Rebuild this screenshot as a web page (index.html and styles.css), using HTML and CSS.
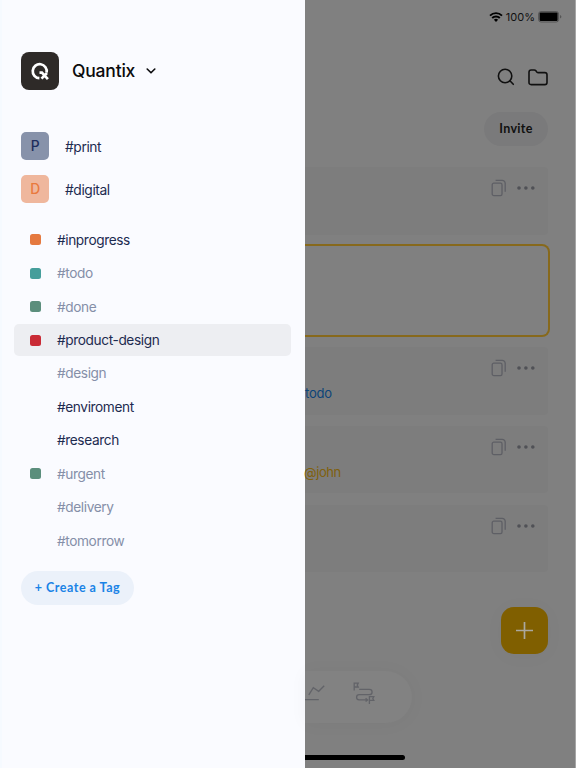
FILE: index.html
```html
<!DOCTYPE html>
<html lang="en">

<head>
    <meta charset="utf-8">
    <title>Quantix</title>
    <link rel="stylesheet" href="styles.css">
</head>

<body>
    <!-- shared icons -->
    <svg class="defs" width="0" height="0">
        <symbol id="copy" viewBox="0 0 16 18">
            <rect x="1.2" y="4.2" width="9.8" height="12.4" rx="1.6" />
            <path d="M4.6 1.4h6.6a3 3 0 0 1 3 3v8.4" />
        </symbol>
        <symbol id="more" viewBox="0 0 18 4">
            <circle cx="2" cy="2" r="1.8" />
            <circle cx="8.9" cy="2" r="1.8" />
            <circle cx="15.8" cy="2" r="1.8" />
        </symbol>
    </svg>
    <div class="app">
        <aside class="sidebar">
            <div class="brand">
                <div class="logo">
                    <svg width="20" height="20" viewBox="0 0 20 20">
                        <path d="M9.400 17.200A7 7 0 1 1 16.600 11.600" />
                        <path d="M9.500 11.600h2.400l6 6.600M17 12L11.500 17.600" />
                    </svg>
                </div>
                <span class="brand-name">Quantix</span>
                <svg class="chevron" width="10" height="6" viewBox="0 0 10 6"><path d="M1.2 1l3.8 3.8L8.8 1" /></svg>
            </div>
            <ul class="groups">
                <li><span class="letter blue">P</span><span>#print</span></li>
                <li><span class="letter orange">D</span><span>#digital</span></li>
            </ul>
            <ul class="tags">
                <li class="tag on"><i class="dot c-orange"></i><span>#inprogress</span></li>
                <li class="tag"><i class="dot c-teal"></i><span>#todo</span></li>
                <li class="tag"><i class="dot c-green"></i><span>#done</span></li>
                <li class="tag on current"><i class="dot c-red"></i><span>#product-design</span></li>
                <li class="tag"><i class="dot"></i><span>#design</span></li>
                <li class="tag on"><i class="dot"></i><span>#enviroment</span></li>
                <li class="tag on"><i class="dot"></i><span>#research</span></li>
                <li class="tag"><i class="dot c-green"></i><span>#urgent</span></li>
                <li class="tag"><i class="dot"></i><span>#delivery</span></li>
                <li class="tag"><i class="dot"></i><span>#tomorrow</span></li>
            </ul>
            <button class="create">+ Create a Tag</button>
        </aside>

        <main class="board">
            <div class="status">
                <svg width="14" height="10" viewBox="0 0 14 10">
                    <path class="wave" d="M1 3.6a8.6 8.6 0 0 1 12 0M3.2 6a5.4 5.4 0 0 1 7.6 0" />
                    <path d="M7 9.9L4.9 7.8a3 3 0 0 1 4.2 0z" />
                </svg>
                <span>100%</span>
                <svg width="24" height="12" viewBox="0 0 24 12">
                    <rect class="shell" x=".6" y=".6" width="20" height="10.4" rx="2.4" />
                    <rect x="1.6" y="1.6" width="18" height="8.4" rx="1" />
                    <path class="cap" d="M22 4v3.6q1.4-.5 1.4-1.8T22 4z" />
                </svg>
            </div>
            <div class="tools">
                <svg width="18" height="18" viewBox="0 0 18 18"><circle cx="8.1" cy="8" r="6.7" /><path d="M12.9 12.8l3.4 3.5" /></svg>
                <svg width="20" height="17" viewBox="0 0 20 17"><path d="M1 3.2Q1 1 3.2 1h3q1 0 1.7.8l.9 1.1q.6.7 1.6.7h6.4Q19 3.6 19 5.8v7.6q0 2.2-2.2 2.2H3.2Q1 15.6 1 13.4z" /></svg>
            </div>
            <button class="invite">Invite</button>
            <div class="cards">
                <div class="card">
                    <div class="actions"><svg class="copy"><use href="#copy" /></svg><svg class="more"><use href="#more" /></svg></div>
                </div>
                <div class="card selected"></div>
                <div class="card">
                    <div class="actions"><svg class="copy"><use href="#copy" /></svg><svg class="more"><use href="#more" /></svg></div>
                    <span class="label todo">todo</span>
                </div>
                <div class="card">
                    <div class="actions"><svg class="copy"><use href="#copy" /></svg><svg class="more"><use href="#more" /></svg></div>
                    <span class="label john">@john</span>
                </div>
                <div class="card">
                    <div class="actions"><svg class="copy"><use href="#copy" /></svg><svg class="more"><use href="#more" /></svg></div>
                </div>
            </div>
            <button class="add">
                <svg width="17" height="17" viewBox="0 0 17 17"><path d="M8.5 0v17M0 8.5h17" /></svg>
            </button>
            <nav class="dock">
                <svg width="20" height="16" viewBox="0 0 20 16"><path d="M3.8 9.8L8.3 2.7l5.4 3.6L19.2.8M0 14.6h13.8" /></svg>
                <svg width="22" height="23" viewBox="0 0 22 23">
                    <path d="M1.2 8.5V1.2h4l-1 1.9 1 1.9h-4M6.2 7.3h10.2a2.7 2.7 0 0 1 0 5.4H6.2a2.6 2.6 0 0 0 0 5.2h7.6M12.6 16.3l2 1.6-2 1.6M16.4 22v-7.4h4.4l-1 1.9 1 1.9h-4.4" />
                </svg>
            </nav>
            <div class="home-bar"></div>
        </main>
    </div>
</body>

</html>
```
FILE: styles.css
```css
html,
body {
    height: 100%;
    margin: 0;
    padding: 0;
}

* {
    box-sizing: border-box;
}

body {
    font-family: Inter, "Liberation Sans", sans-serif;
    font-size: 14px;
    overflow: hidden;
}

ul {
    list-style: none;
    margin: 0;
    padding: 0;
}

button {
    border: 0;
    padding: 0;
    font-family: Lato, "Liberation Sans", sans-serif;
    font-weight: 700;
}

svg {
    display: block;
    fill: none;
    flex: none;
}

.defs {
    display: none;
}

.app {
    display: flex;
    width: 576px;
    height: 768px;
}

/* sidebar */

.sidebar {
    width: 305px;
    flex: none;
    padding: 51.5px 14px 0 19px;
    border-left: 2px solid #f6faff;
    background: #fafbff;
    color: #1d2b50;
}

.brand {
    display: flex;
    align-items: center;
    height: 38px;
}

.logo {
    display: flex;
    align-items: center;
    justify-content: center;
    width: 38px;
    height: 38px;
    border-radius: 8px;
    background: #2e2a28;
}

.logo svg {
    stroke: #fff;
    stroke-width: 2.7;
}

.brand-name {
    margin-left: 13px;
    padding-bottom: 1px;
    color: #0b0b0d;
    font-size: 17.5px;
    font-weight: 500;
    letter-spacing: -0.2px;
}

.chevron {
    margin-left: 11px;
    stroke: #0b0b0d;
    stroke-width: 1.6;
    stroke-linecap: round;
    stroke-linejoin: round;
}

.groups {
    margin-top: 42px;
}

.groups li {
    display: flex;
    align-items: center;
    gap: 16px;
    height: 29px;
    margin-bottom: 14px;
    font-size: 13.8px;
    letter-spacing: -0.4px;
}

.groups li span:last-child {
    padding-top: 2px;
}

.letter {
    width: 28px;
    height: 28px;
    border-radius: 5px;
    line-height: 29px;
    text-align: center;
    font-weight: 500;
}

.blue {
    background: #8792aa;
    color: #1e2c5c;
}

.orange {
    background: #efb79d;
    color: #e9793d;
}

.tags {
    margin: 20px 0 0 -7px;
}

.tag {
    display: flex;
    align-items: center;
    gap: 16px;
    height: 32.4px;
    margin-bottom: 1.05px;
    padding-left: 16px;
    border-radius: 5px;
    color: #858fa8;
    font-size: 13.7px;
    letter-spacing: -0.4px;
}

.on {
    color: #1d2b50;
}

.current {
    background: #edeef2;
}

.dot {
    width: 11px;
    height: 11px;
    border-radius: 2.5px;
}

.c-orange {
    background: #e5793f;
}

.c-teal {
    background: #459e9b;
}

.c-green {
    background: #5b8e7c;
}

.c-red {
    background: #c92b36;
}

.create {
    width: 113px;
    height: 34px;
    margin-top: 13px;
    border-radius: 17px;
    background: #ebf1fa;
    color: #1a83e6;
    font-size: 12.5px;
    letter-spacing: 0.5px;
}

/* dimmed page */

.board {
    display: flex;
    flex-direction: column;
    align-items: flex-end;
    width: 271px;
    padding-right: 27px;
    border-right: 1px solid #a6a6a6;
    background: #808080;
}

.status {
    display: flex;
    align-items: center;
    gap: 3px;
    height: 34px;
    margin-right: -14px;
    color: #111;
    font-size: 11px;
}

.status svg {
    fill: #000;
}

.status .wave {
    fill: none;
    stroke: #000;
    stroke-width: 1.9;
}

.status .shell {
    fill: none;
    stroke: #555;
}

.status .cap {
    fill: #555;
}

.tools {
    display: flex;
    align-items: center;
    gap: 13px;
    height: 20px;
    margin-top: 33px;
}

.tools svg {
    stroke: #101010;
    stroke-width: 1.6;
    stroke-linecap: round;
    stroke-linejoin: round;
}

.invite {
    width: 64px;
    height: 34px;
    margin-top: 24.5px;
    border-radius: 17px;
    background: #7a7a7b;
    color: #101010;
    font-size: 12.5px;
    letter-spacing: 0.3px;
}

.cards {
    width: 100%;
    padding-top: 21.5px;
}

.card {
    display: flex;
    flex-direction: column;
    height: 67.5px;
    margin-bottom: 11.2px;
    padding-top: 12px;
    border-radius: 0 4px 4px 0;
    background: #7d7d7d;
}

.selected {
    height: 93px;
    margin: -1.7px -1.5px 10.3px 0;
    border: 2px solid #87691c;
    border-left: 0;
    border-radius: 0 8px 8px 0;
    background: #808080;
}

.actions {
    display: flex;
    align-items: center;
    justify-content: flex-end;
    gap: 10px;
    height: 18px;
    padding-right: 13px;
}

.copy {
    width: 16px;
    height: 18px;
    stroke: #5e5f65;
    stroke-width: 1.3;
}

.more {
    width: 18px;
    height: 4px;
    fill: #505156;
}

.label {
    margin-top: 8px;
    font-size: 13px;
    line-height: 16px;
    letter-spacing: -0.4px;
}

.todo {
    color: #0c4479;
    letter-spacing: -0.2px;
}

.john {
    margin-left: -1px;
    color: #80600c;
}

.add {
    display: flex;
    align-items: center;
    justify-content: center;
    width: 47px;
    height: 47px;
    margin-top: 24px;
    border-radius: 13px;
    background: #805f00;
    box-shadow: 0 2px 20px rgba(0, 0, 0, 0.03);
}

.add svg {
    stroke: #aaa89f;
    stroke-width: 1.7;
}

.dock {
    display: flex;
    align-self: flex-start;
    gap: 28px;
    width: 107px;
    height: 52px;
    margin-top: 17px;
    padding-top: 11px;
    border-radius: 0 26px 26px 0;
    background: #828282;
    box-shadow: 0 1px 18px rgba(0, 0, 0, 0.04);
}

.dock svg {
    stroke: #626368;
    stroke-width: 1.3;
}

.dock svg:first-child {
    margin-top: 3px;
}

.home-bar {
    align-self: flex-start;
    width: 100px;
    height: 5px;
    margin-top: 32px;
    border-radius: 0 3px 3px 0;
    background: #000;
}
```
